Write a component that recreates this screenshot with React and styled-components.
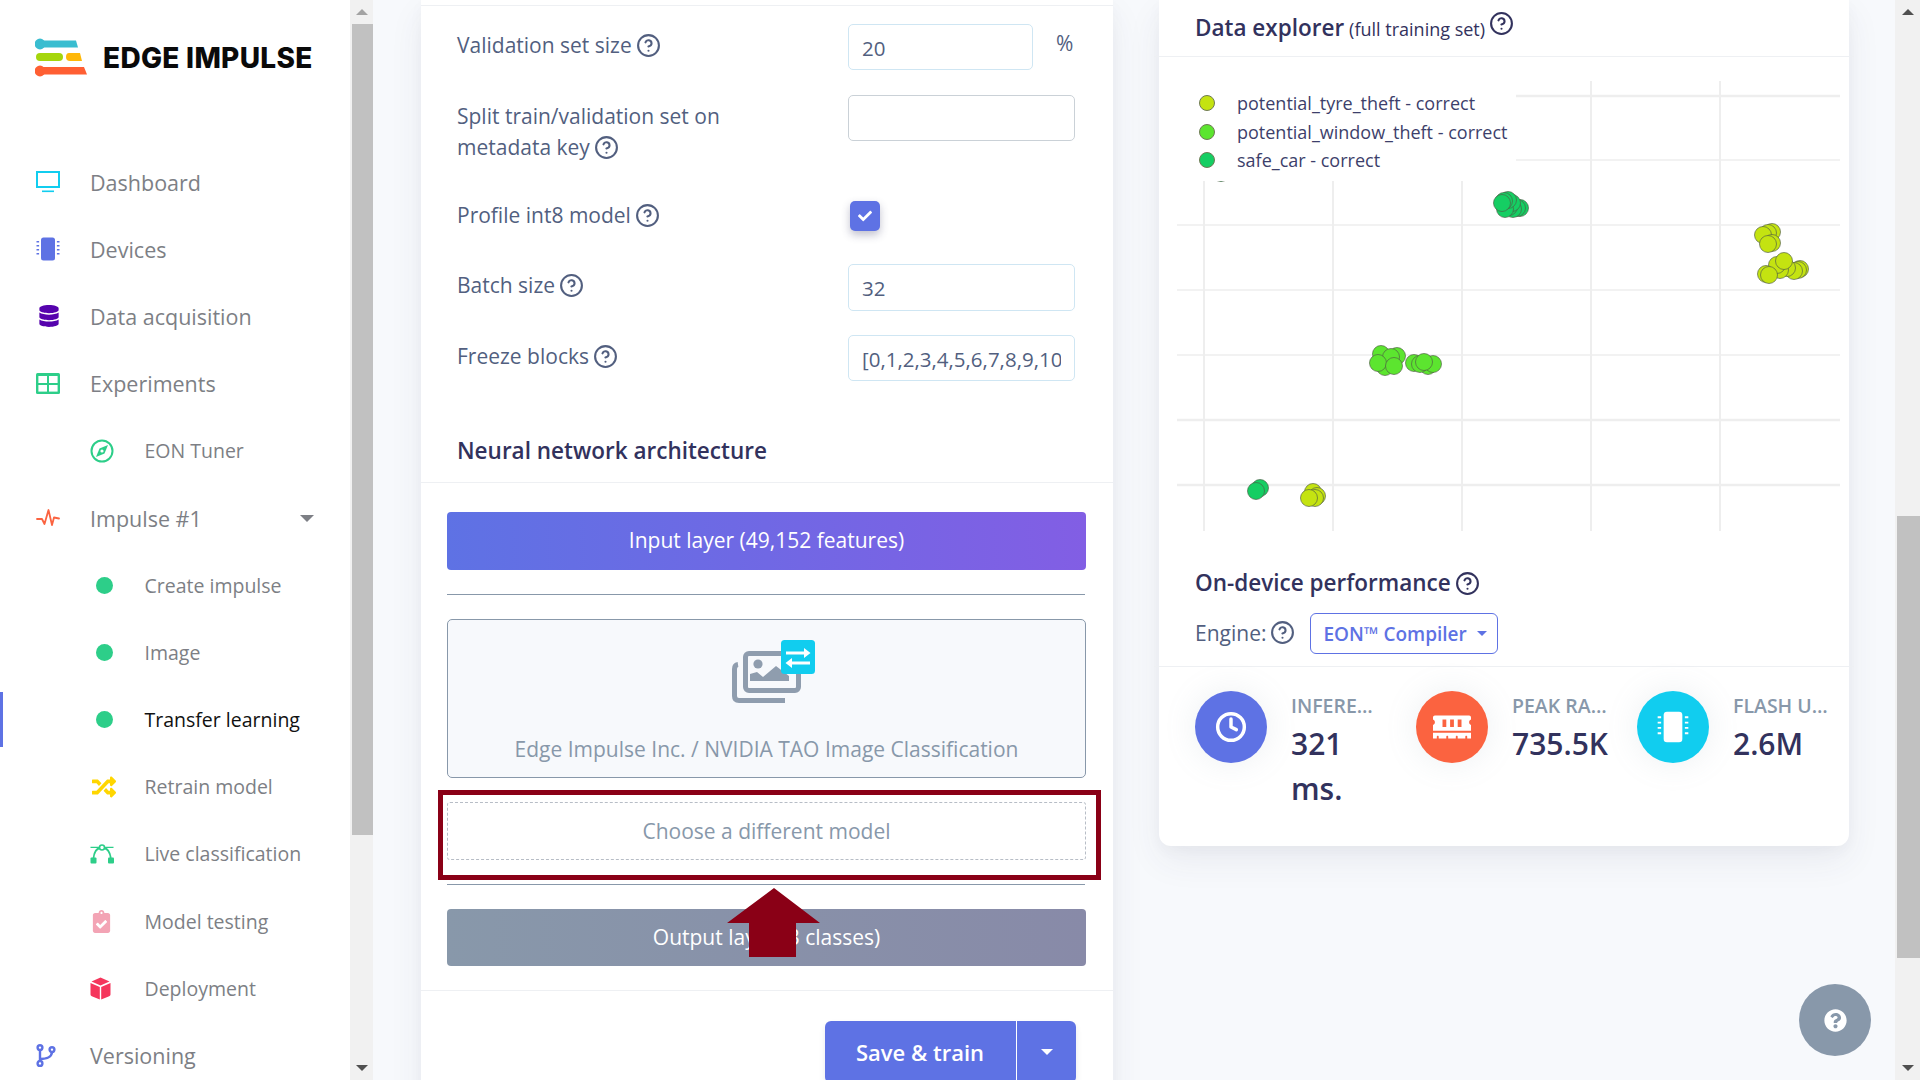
import React from "react";
import styled, { createGlobalStyle } from "styled-components";
import { CircleHelp, Clock } from "lucide-react";
import {
    FaCheck,
    FaClipboardCheck,
    FaDatabase,
    FaMemory,
    FaQuestionCircle,
    FaRandom,
} from "react-icons/fa";

const GlobalStyle = createGlobalStyle`
    html, body {
        margin: 0;
        height: 100%;
        overflow: hidden;
        background: #f7f9fc;
        font-family: "Open Sans", "Liberation Sans", sans-serif;
    }
    * {
        box-sizing: border-box;
    }
`;

const Page = styled.div`
    display: flex;
    width: 1920px;
    height: 1080px;
    overflow: hidden;
    background: #f7f9fc;
`;

const Sidebar = styled.aside`
    width: 350px;
    height: 1080px;
    flex-shrink: 0;
    background: #fff;
    overflow: hidden;
`;

const LogoRow = styled.div`
    display: flex;
    align-items: center;
    gap: 14px;
    height: 148.5px;
    padding: 0 0 32px 35px;
`;

const LogoText = styled.span`
    font-family: "Inter", "Liberation Sans", sans-serif;
    font-weight: 800;
    font-size: 28px;
    letter-spacing: 0.3px;
    color: #0a0a0a;
    white-space: nowrap;
`;

const NavRow = styled.div`
    position: relative;
    display: flex;
    align-items: center;
    height: 67.2px;
    padding-left: ${(p) => (p.$sub ? "90px" : "36px")};
    padding-right: 36px;
    font-size: ${(p) => (p.$sub ? "19.5px" : "21.5px")};
    color: ${(p) => (p.$active ? "#111" : "#7d7f85")};

    &::before {
        content: "";
        display: ${(p) => (p.$active ? "block" : "none")};
        position: absolute;
        left: 0;
        top: 6px;
        bottom: 6px;
        width: 3px;
        background: #5e72e4;
    }
`;

const NavIcon = styled.span`
    display: flex;
    align-items: center;
    width: ${(p) => (p.$sub ? "54.5px" : "54px")};
    flex-shrink: 0;
    color: ${(p) => p.$color};
`;

const Dot = styled.span`
    width: 17px;
    height: 17px;
    margin-left: 6px;
    border-radius: 50%;
    background: #2dce89;
`;

const Caret = styled.span`
    margin-left: ${(p) => (p.$inline ? "0" : "auto")};
    width: 0;
    height: 0;
    border-left: ${(p) => p.$size || 7}px solid transparent;
    border-right: ${(p) => p.$size || 7}px solid transparent;
    border-top: ${(p) => p.$size || 7}px solid ${(p) => p.$color || "#7d7f85"};
`;

const ScrollTrack = styled.div`
    display: flex;
    flex-direction: column;
    width: ${(p) => p.$width}px;
    height: 1080px;
    flex-shrink: 0;
    background: #f1f1f1;
`;

const ScrollButton = styled.div`
    display: flex;
    align-items: center;
    justify-content: center;
    height: 24px;
    flex-shrink: 0;

    &::after {
        content: "";
        width: 0;
        height: 0;
        border-left: 6px solid transparent;
        border-right: 6px solid transparent;
        ${(p) => (p.$down ? "border-top" : "border-bottom")}: 6px solid ${(p) =>
            p.$light ? "#a3a3a3" : "#505050"};
    }
`;

const ScrollSpace = styled.div`
    height: ${(p) => p.$height}px;
    flex-shrink: 0;
`;

const ScrollThumb = styled.div`
    height: ${(p) => p.$height}px;
    flex-shrink: 0;
    margin-left: 2px;
    background: #c1c1c1;
`;

const Main = styled.main`
    flex: 1;
    display: flex;
    align-items: flex-start;
    gap: 46px;
    height: 1080px;
    padding-left: 48px;
    overflow: hidden;
`;

const Card = styled.section`
    width: ${(p) => p.$width}px;
    flex-shrink: 0;
    background: #fff;
    border-radius: 0 0 12px 12px;
    box-shadow: 0 15px 35px rgba(50, 50, 93, 0.07), 0 5px 15px rgba(0, 0, 0, 0.03);
`;

const FormCard = styled(Card)`
    height: 1120px;
    padding-top: 5px;
`;

const Line = styled.div`
    height: 1px;
    background: #eef0f3;
    margin: ${(p) => p.$margin || "0"};
`;

const FormBody = styled.div`
    padding: 18px 38px 0 36px;
`;

const FormRow = styled.div`
    display: grid;
    grid-template-columns: 391px 227px;
    height: ${(p) => p.$height}px;
`;

const Label = styled.div`
    padding-top: ${(p) => (p.$flush ? "0" : "6px")};
    margin-top: ${(p) => (p.$flush ? "-1px" : "0")};
    padding-right: 70px;
    font-size: 21px;
    line-height: 31px;
    color: #525f7f;
`;

const HelpIcon = styled(CircleHelp)`
    display: inline-block;
    width: 25px;
    height: 25px;
    margin-left: 4px;
    vertical-align: -5px;
    color: ${(p) => p.$color || "#525f7f"};
`;

const InputWrap = styled.div`
    display: flex;
    align-items: flex-start;
`;

const TextInput = styled.input`
    width: ${(p) => p.$width || 227}px;
    height: ${(p) => p.$height || 46}px;
    padding: 1px 13px 0 13px;
    font-family: inherit;
    font-size: 20.5px;
    color: #525f7f;
    background: #fff;
    border: 1px solid ${(p) => (p.$muted ? "#cad1d7" : "#cfe6f3")};
    border-radius: 5px;
    outline: none;
`;

const Unit = styled.span`
    margin: 9px 0 0 23px;
    font-size: 21px;
    line-height: 1;
    color: #525f7f;
`;

const CheckBox = styled.div`
    display: flex;
    align-items: center;
    justify-content: center;
    width: 30px;
    height: 30px;
    margin-left: 2px;
    color: #fff;
    font-size: 14px;
    background: #5e72e4;
    border-radius: 5px;
    box-shadow: 0 4px 8px rgba(50, 50, 93, 0.3);
`;

const SectionTitle = styled.h3`
    margin: 0;
    font-size: 22.5px;
    font-weight: 600;
    color: #32325d;
`;

const ArchTitle = styled(SectionTitle)`
    margin-top: 53px;
    padding-left: 36px;
    line-height: 34px;
    height: 48px;
`;

const Layers = styled.div`
    position: relative;
    display: flex;
    flex-direction: column;
    padding: 29px 27px 24px 26px;
`;

const LayerBar = styled.div`
    display: flex;
    align-items: center;
    justify-content: center;
    height: ${(p) => p.$height || 58}px;
    padding-bottom: 2px;
    font-size: 21px;
    color: #fff;
    border-radius: 4px;
    background: linear-gradient(87deg, ${(p) => p.$from}, ${(p) => p.$to});
`;

const LayerRule = styled.div`
    height: 1px;
    background: #8898aa;
    margin: ${(p) => p.$margin};
`;

const ModelBox = styled.div`
    display: flex;
    flex-direction: column;
    align-items: center;
    height: 159px;
    padding-top: 20px;
    font-size: 21px;
    color: #8898aa;
    background: #f7f9fc;
    border: 1px solid #8898aa;
    border-radius: 5px;
`;

const ModelIcon = styled.svg`
    margin-left: 14px;
    margin-bottom: 31px;
`;

const ChooseBox = styled.div`
    display: flex;
    align-items: center;
    justify-content: center;
    height: 58px;
    margin-top: 24px;
    padding-bottom: 1px;
    font-size: 21px;
    color: #8898aa;
    border: 1px dashed #b7bdc6;
    border-radius: 3px;
`;

const Highlight = styled.div`
    position: absolute;
    left: 17px;
    top: 307px;
    width: 663px;
    height: 90px;
    border: 5px solid #8a0016;
    pointer-events: none;
`;

const UpArrow = styled.svg`
    position: absolute;
    left: 305px;
    top: 404px;
    pointer-events: none;
`;

const Actions = styled.div`
    display: flex;
    justify-content: flex-end;
    padding: 30px 37px 0 0;
`;

const SaveButton = styled.div`
    display: flex;
    height: 62px;
    color: #fff;
    background: #5e72e4;
    border-radius: 6px;
    box-shadow: 0 4px 6px rgba(50, 50, 93, 0.11);
`;

const SaveLabel = styled.span`
    display: flex;
    align-items: center;
    width: 192px;
    padding-left: 31px;
    font-size: 22px;
    font-weight: 600;
    border-right: 1px solid #fff;
`;

const SaveCaret = styled.span`
    display: flex;
    align-items: center;
    justify-content: center;
    width: 59px;
`;

const PanelHeader = styled.div`
    display: flex;
    align-items: baseline;
    height: 56px;
    padding: 11px 0 0 36px;
`;

const SmallNote = styled.span`
    margin-left: 5px;
    font-size: 18px;
    color: #32325d;
`;

const Chart = styled.div`
    position: relative;
    width: 663px;
    height: 450px;
    margin: 24px 0 0 18px;
`;

const Legend = styled.ul`
    position: absolute;
    left: 0;
    top: 0;
    width: 339px;
    height: 100px;
    margin: 0;
    padding: 8px 0 0 22px;
    list-style: none;
    background: #fff;
`;

const LegendItem = styled.li`
    display: flex;
    align-items: center;
    height: 28.5px;
    font-size: 18px;
    color: #3d3f6b;
    white-space: nowrap;
`;

const LegendDot = styled.span`
    width: 16px;
    height: 16px;
    margin-right: 22px;
    border-radius: 50%;
    background: ${(p) => p.$color};
    border: 1px solid #6f7a55;
`;

const DeviceHead = styled.div`
    padding: 35px 0 0 36px;
    height: 135px;
`;

const DeviceTitle = styled(SectionTitle)`
    line-height: 34px;
`;

const EngineRow = styled.div`
    display: flex;
    align-items: center;
    margin-top: 11px;
    font-size: 21px;
    color: #525f7f;
`;

const EngineSelect = styled.div`
    display: flex;
    align-items: center;
    justify-content: space-between;
    width: 188px;
    height: 41px;
    margin: 2px 0 0 15px;
    padding: 0 10px 0 12px;
    font-size: 19px;
    font-weight: 600;
    color: #5e72e4;
    border: 1px solid #5e72e4;
    border-radius: 6px;
`;

const Stats = styled.div`
    display: grid;
    grid-template-columns: repeat(3, 221px);
    padding: 24px 0 35px 36px;
`;

const Stat = styled.div`
    display: flex;
    gap: 24px;
`;

const StatCircle = styled.div`
    display: flex;
    align-items: center;
    justify-content: center;
    width: 72px;
    height: 72px;
    flex-shrink: 0;
    color: #fff;
    border-radius: 50%;
    background: ${(p) => p.$color};
    box-shadow: 0 0 32px rgba(136, 152, 170, 0.15);
`;

const StatText = styled.div`
    width: 97px;
`;

const StatLabel = styled.div`
    font-size: 19.5px;
    font-weight: 600;
    line-height: 30px;
    color: #8898aa;
    white-space: nowrap;
    overflow: hidden;
    text-overflow: ellipsis;
`;

const StatValue = styled.div`
    font-size: 30px;
    font-weight: 600;
    line-height: 45px;
    color: #32325d;
`;

const FloatHelp = styled.div`
    position: fixed;
    right: 49px;
    bottom: 24px;
    display: flex;
    align-items: center;
    justify-content: center;
    width: 72px;
    height: 72px;
    color: #fff;
    font-size: 23px;
    background: #8898aa;
    border-radius: 50%;
`;

const LogoMark = () => (
    <svg width="54" height="42" viewBox="0 0 54 42">
        <circle cx="5" cy="7" r="5.4" fill="#39bdd0" />
        <path d="M5 3.5H41L43 10.5H5Z" fill="#39bdd0" />
        <rect x="1" y="16" width="27" height="8" rx="4" fill="#a5d60c" />
        <path d="M34 16H45L47 24H35Q31 24 31 20Q31 16 34 16Z" fill="#ffb808" />
        <circle cx="5" cy="34" r="5.4" fill="#ff5f33" />
        <path d="M5 30H49L52 37.5H5Z" fill="#ff5f33" />
    </svg>
);

const MonitorIcon = () => (
    <svg width="24" height="22" viewBox="0 0 24 22">
        <rect x="1" y="1" width="22" height="15" fill="none" stroke="currentColor" strokeWidth="2" />
        <rect x="6" y="19.5" width="12" height="1.6" fill="currentColor" />
    </svg>
);

const ChipIcon = ({ size = 24 }) => (
    <svg width={size} height={size} viewBox="0 0 24 24" fill="currentColor">
        <rect x="5" y="0.5" width="14" height="23" rx="2.5" />
        <path d="M0.5 4h2.6v1.4H0.5zM0.5 8h2.6v1.4H0.5zM0.5 12h2.6v1.4H0.5zM0.5 16h2.6v1.4H0.5zM20.9 4h2.6v1.4h-2.6zM20.9 8h2.6v1.4h-2.6zM20.9 12h2.6v1.4h-2.6zM20.9 16h2.6v1.4h-2.6z" />
    </svg>
);

const GridIcon = () => (
    <svg width="24" height="21" viewBox="0 0 24 21">
        <rect width="24" height="21" rx="1.5" fill="currentColor" />
        <rect x="2.4" y="3" width="8.6" height="7" fill="#fff" />
        <rect x="13" y="3" width="8.6" height="7" fill="#fff" />
        <rect x="2.4" y="12" width="8.6" height="6.6" fill="#fff" />
        <rect x="13" y="12" width="8.6" height="6.6" fill="#fff" />
    </svg>
);

const CompassIcon = () => (
    <svg width="24" height="24" viewBox="0 0 24 24">
        <circle cx="12" cy="12" r="10.5" fill="none" stroke="currentColor" strokeWidth="2" />
        <path d="M18 6L14.5 14.5L6 18L9.5 9.5Z" fill="currentColor" />
        <circle cx="12" cy="12" r="1.6" fill="#fff" />
    </svg>
);

const PulseIcon = () => (
    <svg width="24" height="20" viewBox="0 0 24 20" fill="none" stroke="currentColor" strokeWidth="1.8" strokeLinejoin="round" strokeLinecap="round">
        <polyline points="1,11 6,11 8.5,16 12.5,2 16,17 18,9.5 23,10.5" />
    </svg>
);

const BezierIcon = () => (
    <svg width="24" height="20" viewBox="0 0 24 20" fill="currentColor">
        <rect x="0.5" y="13.5" width="6" height="6" rx="1" />
        <rect x="18" y="13.5" width="6" height="6" rx="1" />
        <circle cx="12" cy="3.5" r="2.5" fill="none" stroke="currentColor" strokeWidth="1.6" />
        <path d="M3.5 14Q4.5 5 10 4M20.8 14Q19.5 5 14 4" fill="none" stroke="currentColor" strokeWidth="1.8" />
        <path d="M0.5 2.8H9V4H0.5zM15 2.8H23.5V4H15z" />
    </svg>
);

const CubeIcon = () => (
    <svg width="21" height="23" viewBox="0 0 21 23" fill="currentColor">
        <path d="M10.5 0.5L19.5 4.5L10.5 8.4L1.5 4.5Z" />
        <path d="M0.5 6L9.8 10V22.5L1.8 19.3Q0.5 18.8 0.5 17.5Z" />
        <path d="M20.5 6L11.2 10V22.5L19.2 19.3Q20.5 18.8 20.5 17.5Z" />
    </svg>
);

const BranchIcon = () => (
    <svg width="20" height="23" viewBox="0 0 20 23" fill="none" stroke="currentColor" strokeWidth="2.4">
        <circle cx="4" cy="3.6" r="2.4" />
        <circle cx="4" cy="19.4" r="2.4" />
        <circle cx="16" cy="5.6" r="2.4" />
        <path d="M4 6V17M4 15Q15.5 15 16 8" />
    </svg>
);

const ImageStackIcon = () => (
    <ModelIcon width="84" height="64" viewBox="0 0 84 64">
        <g fill="none" stroke="#8f9dae" strokeWidth="5">
            <path d="M53 60.5H7Q2.5 60.5 2.5 56V29Q2.5 25 6 24.5" />
            <rect x="13.5" y="13.5" width="53" height="37" rx="3.5" />
        </g>
        <circle cx="26" cy="24" r="4.6" fill="#8f9dae" />
        <path d="M18 41V34L25 32L31 37L44 26L57 36V41Z" fill="#8f9dae" />
        <rect x="49" width="34" height="34" rx="3.5" fill="#11cdef" />
        <path d="M54 11.5H72V8L78.5 13L72 18V14.6H54Z" fill="#fff" />
        <path d="M78 21.5H60V18L53.5 23L60 28V24.6H78Z" fill="#fff" />
    </ModelIcon>
);

const ARROW_POINTS = "48,1 94,36 70,36 70,70 23,70 23,36 1,36";

const GRID_X = [27, 156, 285, 414, 543];
const GRID_Y = [15, 79, 144, 209, 274, 339, 404];
const THICK_Y = [15, 339, 404];

// points are page coordinates minus the chart's corner, last drawn on top
const SAFE = "#15ce63";
const WINDOW = "#5ce52f";
const TYRE = "#c4e311";
const POINTS = [
    [44, 92, SAFE],
    [343, 127, SAFE],
    [340, 127, SAFE],
    [336, 128, SAFE],
    [332, 126, SAFE],
    [335, 122, SAFE],
    [328, 128, SAFE],
    [331, 119, SAFE],
    [327, 120, SAFE],
    [325, 122, SAFE],
    [595, 151, TYRE],
    [591, 152, TYRE],
    [586, 154, TYRE],
    [595, 162, TYRE],
    [591, 163, TYRE],
    [623, 188, TYRE],
    [621, 189, TYRE],
    [617, 190, TYRE],
    [610, 187, TYRE],
    [603, 189, TYRE],
    [600, 184, TYRE],
    [589, 193, TYRE],
    [592, 194, TYRE],
    [607, 180, TYRE],
    [220, 275, WINDOW],
    [204, 273, WINDOW],
    [208, 286, WINDOW],
    [214, 276, WINDOW],
    [201, 282, WINDOW],
    [217, 285, WINDOW],
    [251, 285, WINDOW],
    [256, 283, WINDOW],
    [237, 282, WINDOW],
    [243, 283, WINDOW],
    [247, 281, WINDOW],
    [83, 407, SAFE],
    [79, 410, SAFE],
    [136, 411, TYRE],
    [140, 415, TYRE],
    [138, 417, TYRE],
    [132, 417, TYRE],
];

const ScatterPlot = () => (
    <svg width="663" height="450" viewBox="0 0 663 450">
        {GRID_Y.map((y) => (
            <line key={y} x1="0" x2="663" y1={y} y2={y} stroke="#eeeeee" strokeWidth={THICK_Y.includes(y) ? 2.5 : 1.5} />
        ))}
        {GRID_X.map((x) => (
            <line key={x} x1={x} x2={x} y1="0" y2="450" stroke="#eeeeee" strokeWidth="2" />
        ))}
        {POINTS.map(([x, y, color], i) => (
            <circle key={i} cx={x} cy={y} r="8.5" fill={color} stroke="#4f5b45" strokeOpacity="0.65" strokeWidth="1" />
        ))}
    </svg>
);

const NAV_ITEMS = [
    { label: "Dashboard", color: "#11cdef", icon: <MonitorIcon /> },
    { label: "Devices", color: "#5e72e4", icon: <ChipIcon /> },
    { label: "Data acquisition", color: "#5603ad", icon: <FaDatabase size={22} style={{ marginLeft: 2 }} /> },
    { label: "Experiments", color: "#2dce89", icon: <GridIcon /> },
    { label: "EON Tuner", color: "#2dce89", icon: <CompassIcon />, sub: true },
    { label: "Impulse #1", color: "#fb6340", icon: <PulseIcon />, caret: true },
    { label: "Create impulse", dot: true, sub: true },
    { label: "Image", dot: true, sub: true },
    { label: "Transfer learning", dot: true, sub: true, active: true },
    { label: "Retrain model", color: "#ffd600", icon: <FaRandom size={24} style={{ marginLeft: 2 }} />, sub: true },
    { label: "Live classification", color: "#2dce89", icon: <BezierIcon />, sub: true },
    { label: "Model testing", color: "#f3a4b5", icon: <FaClipboardCheck size={23} />, sub: true },
    { label: "Deployment", color: "#f5365c", icon: <CubeIcon />, sub: true },
    { label: "Versioning", color: "#5e72e4", icon: <BranchIcon /> },
];

const FORM_ROWS = [
    { label: "Validation set size", value: "20", height: 71, width: 185, unit: "%" },
    { label: "Split train/validation set on metadata key", value: "", height: 106, muted: true },
    { label: "Profile int8 model", check: true, height: 63, flush: true },
    { label: "Batch size", value: "32", height: 71, inputHeight: 47 },
    { label: "Freeze blocks", value: "[0,1,2,3,4,5,6,7,8,9,10,11,12,13]", height: 46 },
];

const STATS = [
    { label: "Inferencing time", value: "321 ms.", color: "#5e72e4", icon: <Clock size={32} strokeWidth={2.6} /> },
    { label: "Peak RAM usage", value: "735.5K", color: "#fb6340", icon: <FaMemory size={38} /> },
    { label: "Flash usage", value: "2.6M", color: "#11cdef", icon: <ChipIcon size={32} /> },
];

const App = () => (
    <Page>
        <GlobalStyle />
        <Sidebar>
            <LogoRow>
                <LogoMark />
                <LogoText>EDGE IMPULSE</LogoText>
            </LogoRow>
            {NAV_ITEMS.map((item) => (
                <NavRow key={item.label} $sub={item.sub} $active={item.active}>
                    <NavIcon $color={item.color} $sub={item.sub}>{item.dot ? <Dot /> : item.icon}</NavIcon>
                    {item.label}
                    {item.caret && <Caret />}
                </NavRow>
            ))}
        </Sidebar>
        <ScrollTrack $width={23}>
            <ScrollButton $light />
            <ScrollThumb $height={811} />
            <ScrollSpace $height={221} />
            <ScrollButton $down />
        </ScrollTrack>
        <Main>
            <FormCard $width={692}>
                <Line />
                <FormBody>
                    {FORM_ROWS.map((row) => (
                        <FormRow key={row.label} $height={row.height}>
                            <Label $flush={row.flush}>
                                {row.label}
                                <HelpIcon />
                            </Label>
                            <InputWrap>
                                {row.check ? (
                                    <CheckBox>
                                        <FaCheck />
                                    </CheckBox>
                                ) : (
                                    <TextInput
                                        readOnly
                                        value={row.value}
                                        $width={row.width}
                                        $height={row.inputHeight}
                                        $muted={row.muted}
                                    />
                                )}
                                {row.unit && <Unit>{row.unit}</Unit>}
                            </InputWrap>
                        </FormRow>
                    ))}
                </FormBody>
                <ArchTitle>Neural network architecture</ArchTitle>
                <Line />
                <Layers>
                    <LayerBar $from="#5e72e4" $to="#825ee4">Input layer (49,152 features)</LayerBar>
                    <LayerRule $margin="24px 1px 24px 0" />
                    <ModelBox>
                        <ImageStackIcon />
                        Edge Impulse Inc. / NVIDIA TAO Image Classification
                    </ModelBox>
                    <ChooseBox>Choose a different model</ChooseBox>
                    <LayerRule $margin="24px 1px 24px 0" />
                    <LayerBar $from="#8898aa" $to="#888aa8" $height={57}>Output layer (3 classes)</LayerBar>
                    <Highlight />
                    <UpArrow width="95" height="71" viewBox="0 0 95 71">
                        <polygon points={ARROW_POINTS} fill="#8a0016" />
                    </UpArrow>
                </Layers>
                <Line />
                <Actions>
                    <SaveButton>
                        <SaveLabel>Save &amp; train</SaveLabel>
                        <SaveCaret>
                            <Caret $inline $color="#fff" $size={6} />
                        </SaveCaret>
                    </SaveButton>
                </Actions>
            </FormCard>
            <Card $width={690}>
                <PanelHeader>
                    <SectionTitle>Data explorer</SectionTitle>
                    <SmallNote>(full training set)</SmallNote>
                    <HelpIcon $color="#32325d" />
                </PanelHeader>
                <Line $margin="0 -5px" />
                <Chart>
                    <ScatterPlot />
                    <Legend>
                        <LegendItem>
                            <LegendDot $color={TYRE} />
                            potential_tyre_theft - correct
                        </LegendItem>
                        <LegendItem>
                            <LegendDot $color={WINDOW} />
                            potential_window_theft - correct
                        </LegendItem>
                        <LegendItem>
                            <LegendDot $color={SAFE} />
                            safe_car - correct
                        </LegendItem>
                    </Legend>
                </Chart>
                <DeviceHead>
                    <DeviceTitle>
                        On-device performance
                        <HelpIcon $color="#32325d" />
                    </DeviceTitle>
                    <EngineRow>
                        Engine:
                        <HelpIcon />
                        <EngineSelect>
                            <span>EON™ Compiler</span>
                            <Caret $inline $color="#5e72e4" $size={5.5} />
                        </EngineSelect>
                    </EngineRow>
                </DeviceHead>
                <Line $margin="0 -5px" />
                <Stats>
                    {STATS.map((stat) => (
                        <Stat key={stat.label}>
                            <StatCircle $color={stat.color}>{stat.icon}</StatCircle>
                            <StatText>
                                <StatLabel>{stat.label.toUpperCase()}</StatLabel>
                                <StatValue>{stat.value}</StatValue>
                            </StatText>
                        </Stat>
                    ))}
                </Stats>
            </Card>
        </Main>
        <ScrollTrack $width={25}>
            <ScrollButton />
            <ScrollSpace $height={492} />
            <ScrollThumb $height={442} />
            <ScrollSpace $height={98} />
            <ScrollButton $down />
        </ScrollTrack>
        <FloatHelp>
            <FaQuestionCircle />
        </FloatHelp>
    </Page>
);

export default App;
